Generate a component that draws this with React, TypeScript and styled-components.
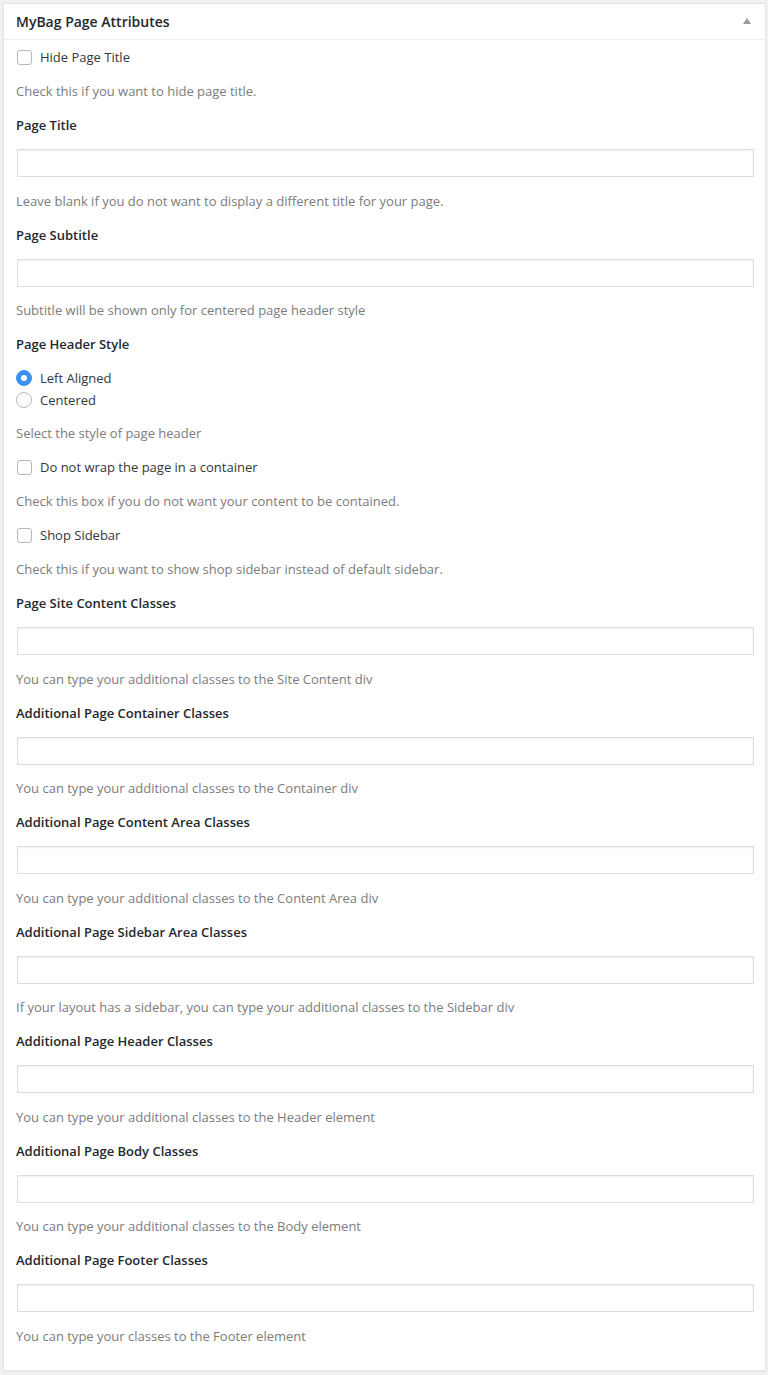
import React from "react";
import styled, { createGlobalStyle } from "styled-components";

const GlobalStyle = createGlobalStyle`
  html, body {
    margin: 0;
    padding: 0;
    background: #f1f1f1;
    font-family: "Open Sans", "Noto Sans", "Liberation Sans", sans-serif;
    font-size: 13px;
    color: #444;
  }
  * { box-sizing: border-box; }
`;

const Page = styled.div`
  padding: 3px 2px 4px 3px;
`;

const Panel = styled.section`
  background: #fff;
  border: 1px solid #e5e5e5;
  box-shadow: 0 1px 1px rgba(0, 0, 0, 0.04);
`;

const PanelHeader = styled.div`
  display: flex;
  align-items: center;
  justify-content: space-between;
  height: 36px;
  padding: 0 14px 0 12px;
  border-bottom: 1px solid #eee;
`;

const Title = styled.h2`
  margin: 0;
  font-size: 14px;
  font-weight: 600;
  line-height: 20px;
  color: #23282d;
`;

const ToggleArrow = styled.span`
  width: 0;
  height: 0;
  border-left: 4px solid transparent;
  border-right: 4px solid transparent;
  border-bottom: 6px solid #9a9a9a;
  margin-top: -1px;
`;

const Body = styled.div`
  display: flex;
  flex-direction: column;
  padding: 7px 11px 24px 12px;
`;

const ChoiceRow = styled.label<{ $tight?: boolean }>`
  display: flex;
  align-items: center;
  gap: 8px;
  height: 20px;
  line-height: 20px;
  color: #32373c;
  margin-bottom: ${(p) => (p.$tight ? "2px" : "14px")};
`;

const CheckBox = styled.span`
  width: 15px;
  height: 15px;
  margin-left: 1px;
  border: 1px solid #b4b9be;
  border-radius: 3px;
  background: #fff;
  flex: none;
`;

const RadioDot = styled.span<{ $checked?: boolean }>`
  width: 16px;
  height: 16px;
  border-radius: 50%;
  flex: none;
  display: flex;
  align-items: center;
  justify-content: center;
  background: ${(p) => (p.$checked ? "#3b8fef" : "#fff")};
  border: 1px solid ${(p) => (p.$checked ? "#3b8fef" : "#b4b9be")};
  &::after {
    content: "";
    width: 6px;
    height: 6px;
    border-radius: 50%;
    background: ${(p) => (p.$checked ? "#fff" : "transparent")};
  }
`;

const RadioGroup = styled.div`
  display: flex;
  flex-direction: column;
  margin-bottom: 11px;
`;

const Description = styled.p<{ $last?: boolean }>`
  margin: 0 0 ${(p) => (p.$last ? "0" : "14px")} 0;
  line-height: 20px;
  color: #7c7c7c;
`;

const FieldLabel = styled.p`
  margin: 0 0 14px 0;
  line-height: 20px;
  font-weight: 600;
  color: #23282d;
`;

const TextInput = styled.input`
  display: block;
  height: 28px;
  margin: 0 0 13.5px 1px;
  width: calc(100% - 1px);
  border: 1px solid #ddd;
  box-shadow: inset 0 1px 2px rgba(0, 0, 0, 0.07);
  background: #fff;
  font: inherit;
  padding: 3px 5px;
  outline: none;
`;

const textFields: { label: string; help: string }[] = [
  { label: "Page Site Content Classes", help: "You can type your additional classes to the Site Content div" },
  { label: "Additional Page Container Classes", help: "You can type your additional classes to the Container div" },
  { label: "Additional Page Content Area Classes", help: "You can type your additional classes to the Content Area div" },
  { label: "Additional Page Sidebar Area Classes", help: "If your layout has a sidebar, you can type your additional classes to the Sidebar div" },
  { label: "Additional Page Header Classes", help: "You can type your additional classes to the Header element" },
  { label: "Additional Page Body Classes", help: "You can type your additional classes to the Body element" },
  { label: "Additional Page Footer Classes", help: "You can type your classes to the Footer element" },
];

const Field = ({ label, help, last }: { label: string; help: string; last?: boolean }) => (
  <>
    <FieldLabel>{label}</FieldLabel>
    <TextInput type="text" />
    <Description $last={last}>{help}</Description>
  </>
);

const Check = ({ label }: { label: string }) => (
  <ChoiceRow>
    <CheckBox />
    {label}
  </ChoiceRow>
);

export default function App() {
  return (
    <>
      <GlobalStyle />
      <Page>
        <Panel>
          <PanelHeader>
            <Title>MyBag Page Attributes</Title>
            <ToggleArrow />
          </PanelHeader>
          <Body>
            <Check label="Hide Page Title" />
            <Description>Check this if you want to hide page title.</Description>
            <Field label="Page Title" help="Leave blank if you do not want to display a different title for your page." />
            <Field label="Page Subtitle" help="Subtitle will be shown only for centered page header style" />
            <FieldLabel>Page Header Style</FieldLabel>
            <RadioGroup>
              <ChoiceRow $tight>
                <RadioDot $checked />
                Left Aligned
              </ChoiceRow>
              <ChoiceRow $tight>
                <RadioDot />
                Centered
              </ChoiceRow>
            </RadioGroup>
            <Description>Select the style of page header</Description>
            <Check label="Do not wrap the page in a container" />
            <Description>Check this box if you do not want your content to be contained.</Description>
            <Check label="Shop Sidebar" />
            <Description>Check this if you want to show shop sidebar instead of default sidebar.</Description>
            {textFields.map((f, i) => (
              <Field key={f.label} label={f.label} help={f.help} last={i === textFields.length - 1} />
            ))}
          </Body>
        </Panel>
      </Page>
    </>
  );
}
